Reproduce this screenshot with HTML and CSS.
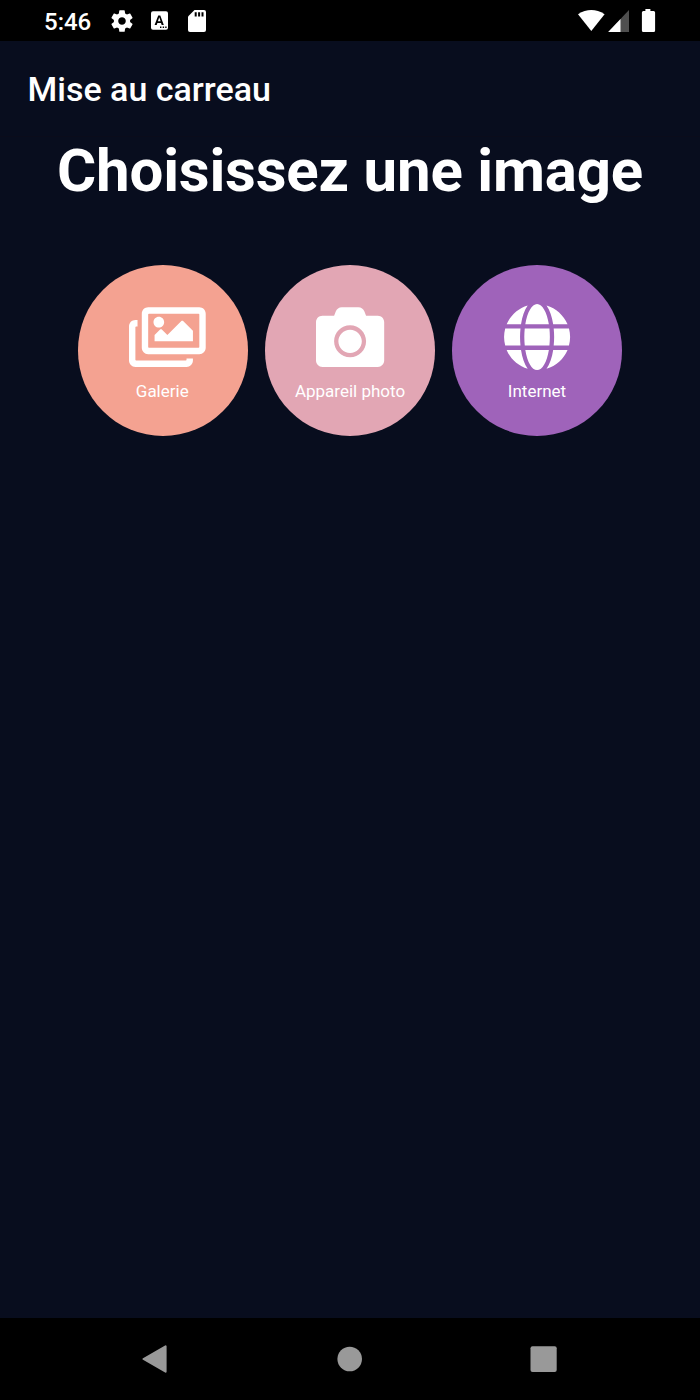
FILE: index.html
```html
<!DOCTYPE html>
<html lang="fr">
<head>
<meta charset="utf-8">
<title>Mise au carreau</title>
<link rel="stylesheet" href="styles.css">
</head>
<body>
<div class="status-bar">
  <span class="clock">5:46</span>
  <svg class="gear" viewBox="0 0 24 24"><path d="M19.430 12.980c.04-.32.07-.64.07-.98s-.03-.66-.07-.98l2.110-1.650c.19-.15.24-.42.12-.64l-2-3.460c-.12-.22-.39-.3-.61-.22l-2.490 1c-.52-.4-1.080-.73-1.690-.98l-.38-2.650C14.460 2.180 14.250 2 14 2h-4c-.25 0-.46.18-.49.42l-.38 2.650c-.61.25-1.170.59-1.690.98l-2.490-1c-.23-.09-.49 0-.61.22l-2 3.460c-.13.22-.07.49.12.64l2.110 1.650c-.04.32-.07.65-.07.98s.03.66.07.98l-2.110 1.650c-.19.15-.24.42-.12.64l2 3.460c.12.22.39.3.61.22l2.490-1c.52.4 1.080.73 1.690.98l.38 2.650c.03.24.24.42.49.42h4c.25 0 .46-.18.49-.42l.38-2.650c.61-.25 1.170-.59 1.690-.98l2.490 1c.23.09.49 0 .61-.22l2-3.460c.12-.22.07-.49-.12-.64l-2.110-1.650zM12 15.500c-1.930 0-3.500-1.570-3.500-3.500s1.570-3.500 3.500-3.500 3.500 1.570 3.500 3.500-1.570 3.500-3.500 3.500z"/></svg>
  <svg class="keyboard" viewBox="0 0 17 19"><rect y=".3" width="17" height="18.500" rx="2"/><path class="ink" d="M7.200 4.500h2.100l3.500 9.500h-2.100l-.7-2H6.400l-.7 2h-2.100zM6.900 10.300h2.700L8.250 6.300z" fill-rule="evenodd"/><path class="ink" d="M9 15.600h1.400v1.300H9zM11.700 15.600h1.400v1.300h-1.400zM14.200 15.600h1.400v1.300h-1.400z"/></svg>
  <svg class="sd-card" viewBox="0 0 18 22"><path d="M6.500 0H16a2 2 0 0 1 2 2v18a2 2 0 0 1-2 2H2a2 2 0 0 1-2-2V6.500z"/><path class="ink" d="M6.700 2.300h2v4.200h-2zM10.100 2.300h2v4.200h-2zM13.500 2.300h2v4.200h-2z"/></svg>
  <svg class="signals" viewBox="0 0 78 24"><path d="M0 5.200Q13.300-3.200 26.600 5.200L13.300 22z"/><path class="dim" d="M51 1v22H30.200z"/><path d="M42.500 10v13H30.200z"/><path d="M67.400 0h5v2h3.200a1.500 1.500 0 0 1 1.500 1.500v18a1.500 1.500 0 0 1-1.500 1.500H65.400a1.500 1.500 0 0 1-1.500-1.500v-18A1.500 1.500 0 0 1 65.400 2h2z"/></svg>
</div>
<header class="app-bar">Mise au carreau</header>
<main class="content">
  <h1 class="heading">Choisissez une image</h1>
  <div class="choices">
    <button class="choice gallery">
      <svg class="choice-icon" viewBox="0 0 512 512"><path d="M480 416v16c0 26.510-21.490 48-48 48H48c-26.510 0-48-21.490-48-48V176c0-26.510 21.490-48 48-48h16v48H54a6 6 0 0 0-6 6v244a6 6 0 0 0 6 6h372a6 6 0 0 0 6-6v-10h48zm42-336H150a6 6 0 0 0-6 6v244a6 6 0 0 0 6 6h372a6 6 0 0 0 6-6V86a6 6 0 0 0-6-6zm6-48c26.510 0 48 21.490 48 48v256c0 26.510-21.490 48-48 48H144c-26.510 0-48-21.490-48-48V80c0-26.510 21.490-48 48-48h384zM264 144c0 22.091-17.909 40-40 40s-40-17.909-40-40 17.909-40 40-40 40 17.909 40 40zm-72 96l39.515-39.515c4.686-4.686 12.284-4.686 16.971 0L288 240l103.515-103.515c4.686-4.686 12.284-4.686 16.971 0L480 208v80H192v-48z"/></svg>
      <span>Galerie</span>
    </button>
    <button class="choice camera">
      <svg class="choice-icon" viewBox="0 0 512 512"><path d="M512 144v288c0 26.500-21.500 48-48 48H48c-26.500 0-48-21.500-48-48V144c0-26.500 21.500-48 48-48h88l12.300-32.900c7-18.700 24.900-31.100 44.900-31.100h125.500c20 0 37.900 12.400 44.900 31.100L376 96h88c26.500 0 48 21.500 48 48zM376 288c0-66.200-53.800-120-120-120s-120 53.800-120 120 53.800 120 120 120 120-53.800 120-120zm-32 0c0 48.500-39.500 88-88 88s-88-39.500-88-88 39.500-88 88-88 88 39.500 88 88z"/></svg>
      <span>Appareil photo</span>
    </button>
    <button class="choice internet">
      <svg class="choice-icon" viewBox="-8 0 512 512"><path d="M336.500 160C322 70.700 287.800 8 248 8s-74 62.700-88.500 152h177zM152 256c0 22.200 1.200 43.500 3.300 64h185.300c2.100-20.500 3.300-41.800 3.300-64s-1.200-43.500-3.300-64H155.300c-2.100 20.500-3.300 41.800-3.300 64zm324.700-96c-28.600-67.900-86.500-120.400-158-141.600 24.400 33.800 41.200 84.700 50 141.600h108zM177.200 18.400C105.800 39.600 47.800 92.100 19.300 160h108c8.700-56.900 25.500-107.800 49.900-141.600zM487.400 192H372.700c2.100 21 3.300 42.500 3.300 64s-1.200 43-3.300 64h114.600c5.500-20.500 8.600-41.800 8.600-64s-3.100-43.500-8.500-64zM120 256c0-21.500 1.200-43 3.300-64H8.600C3.200 212.500 0 233.800 0 256s3.200 43.500 8.600 64h114.600c-2-21-3.200-42.500-3.200-64zm39.500 96c14.500 89.300 48.700 152 88.500 152s74-62.700 88.500-152h-177zm159.300 141.600c71.400-21.200 129.400-73.700 158-141.600h-108c-8.800 56.900-25.600 107.800-50 141.600zM19.300 352c28.600 67.900 86.500 120.400 158 141.600-24.400-33.800-41.200-84.700-50-141.600h-108z"/></svg>
      <span>Internet</span>
    </button>
  </div>
</main>
<nav class="nav-bar">
  <svg class="nav-icon" viewBox="0 0 28 28"><path d="M2.500 14 24.600 1.300V26.700z" stroke-width="2" stroke-linejoin="round"/></svg>
  <svg class="nav-icon" viewBox="0 0 28 28"><circle cx="13.700" cy="14" r="12.300"/></svg>
  <svg class="nav-icon" viewBox="0 0 28 28"><rect x=".5" y="1.200" width="26.200" height="25.700" rx="2"/></svg>
</nav>
</body>
</html>
```

FILE: styles.css
```css
* { box-sizing: border-box; }

body {
  margin: 0;
  height: 1400px;
  display: flex;
  flex-direction: column;
  background: #080d1e;
  color: #fff;
  font-family: Roboto, sans-serif;
}

svg { display: block; flex: none; fill: #fff; }

.status-bar {
  height: 41px;
  padding: 0 44px;
  display: flex;
  align-items: center;
  background: #000;
}

.clock {
  width: 65px;
  padding-top: 2px;
  font-size: 24px;
  font-weight: 500;
  line-height: 28px;
}

.gear { width: 26px; height: 26px; }
.keyboard { width: 17px; height: 19px; margin: 0 0 0 16px; }
.sd-card { width: 18px; height: 22px; margin-left: 20px; }
.signals { width: 78px; height: 24px; margin-left: auto; }
.ink { fill: #000; }
.dim { fill: #4f4f4f; }

.app-bar {
  height: 96px;
  padding: 0 27.500px;
  font-size: 34px;
  font-weight: 500;
  line-height: 97px;
  border-bottom: 1px solid #0b0c1b;
}

.content { flex: 1; }

.heading {
  margin: 0;
  font-size: 60px;
  font-weight: 700;
  letter-spacing: -0.2px;
  line-height: 67px;
  text-align: center;
  white-space: nowrap;
}

.choices {
  display: flex;
  justify-content: center;
  gap: 16.500px;
  padding-top: 61.400px;
}

.choice {
  width: 170.500px;
  height: 170.500px;
  padding: 37.300px 0 0;
  border: 0;
  border-radius: 50%;
  display: flex;
  flex-direction: column;
  align-items: center;
  gap: 10.300px;
  color: #fff;
  font: 400 17px/20px Roboto, sans-serif;
  white-space: nowrap;
}

.choice-icon { width: 68.200px; height: 68.200px; overflow: visible; }

.gallery { background: #f4a291; }
.gallery span { margin-right: 1.500px; }
.camera { background: #e2a6b4; }
.internet { background: #9f63ba; }

.nav-bar {
  height: 82px;
  padding: 0 142px 0 141px;
  display: flex;
  align-items: center;
  justify-content: space-between;
  background: #000;
}

.nav-icon { width: 28px; height: 28px; fill: #999; }
.nav-icon path { stroke: #999; }
```
